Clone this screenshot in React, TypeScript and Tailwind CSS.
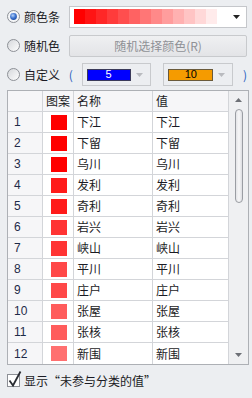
import React from "react";

const FONT = { fontFamily: '"Microsoft YaHei","Noto Sans CJK SC","Noto Sans",sans-serif' };

function Radio({ checked }: { checked?: boolean }) {
  return (
    <svg width="13" height="13" viewBox="0 0 13 13" className="shrink-0">
      <defs>
        <linearGradient id="rf" x1="0" y1="0" x2="1" y2="1">
          <stop offset="0" stopColor="#d4d6da" />
          <stop offset="1" stopColor="#ffffff" />
        </linearGradient>
        <radialGradient id="rd" cx="40%" cy="35%" r="70%">
          <stop offset="0" stopColor="#b9d3f7" />
          <stop offset="0.55" stopColor="#4077d2" />
          <stop offset="1" stopColor="#1d4aa0" />
        </radialGradient>
      </defs>
      <circle cx="6.5" cy="6.5" r="6" fill={checked ? "#f4f5f7" : "url(#rf)"} stroke="#8d9096" />
      {checked && <circle cx="6.5" cy="6.5" r="3.4" fill="url(#rd)" />}
    </svg>
  );
}

const barColors = Array.from({ length: 14 }, (_, i) => {
  const t = i / 13;
  const g = Math.round(255 * t);
  return `rgb(255,${g},${g})`;
});

const rows: [string, string][] = [
  ["下江", "#ff0000"],
  ["下留", "#ff0000"],
  ["乌川", "#ff0000"],
  ["发利", "#ff1b1b"],
  ["奇利", "#ff1b1b"],
  ["岩兴", "#ff3434"],
  ["峡山", "#ff3434"],
  ["平川", "#ff4848"],
  ["庄户", "#ff4848"],
  ["张屋", "#ff5c5c"],
  ["张核", "#ff5c5c"],
  ["新围", "#ff7070"],
];

function Arrow({ color }: { color: string }) {
  return (
    <svg width="7" height="4" viewBox="0 0 7 4">
      <polygon points="0,0 7,0 3.5,4" fill={color} />
    </svg>
  );
}

export default function App() {
  return (
    <div className="w-[252px] h-[398px] bg-[#eceef1] text-[12px] text-[#1b1b24] leading-none overflow-hidden" style={FONT}>
      <div className="pt-[2px] pl-[7px] pr-[5px]">
        <div className="h-[29px] flex items-center">
          <div className="w-[62px] flex items-center gap-[4px]">
            <Radio checked />
            <span>颜色条</span>
          </div>
          <div className="w-[178px] h-[22px] border border-[#c5c7cb] bg-white flex items-center pl-[4px] pr-[6px]">
            <div className="flex h-[15px] w-[154px]">
              {barColors.map((c, i) => (
                <div key={i} className="h-full flex-1" style={{ backgroundColor: c }} />
              ))}
            </div>
            <div className="flex-1 flex justify-end">
              <Arrow color="#222" />
            </div>
          </div>
        </div>
        <div className="h-[29px] flex items-center">
          <div className="w-[62px] flex items-center gap-[4px]">
            <Radio />
            <span>随机色</span>
          </div>
          <div className="w-[178px] h-[22px] border border-[#c8cacd] rounded-[2px] bg-gradient-to-b from-[#eff0f2] to-[#e3e4e7] flex items-center justify-center text-[#8f9196]">
            随机选择颜色(R)
          </div>
        </div>
        <div className="h-[29px] flex items-center">
          <div className="w-[62px] flex items-center gap-[4px]">
            <Radio />
            <span>自定义</span>
          </div>
          <span className="text-[#2a5fc0] w-[13px]">(</span>
          <div className="w-[70px] h-[23px] border border-[#c8cacd] bg-[#eceef1] flex items-center pl-[4px] pr-[7px]">
            <div className="w-[44px] h-[12px] bg-[#0000ff] border border-[#3a3a5a] text-white text-[11px] flex items-center justify-center" style={{ fontFamily: '"Liberation Sans",sans-serif' }}>5</div>
            <div className="flex-1 flex justify-end"><Arrow color="#b9bbbf" /></div>
          </div>
          <div className="w-[12px]" />
          <div className="w-[70px] h-[23px] border border-[#c8cacd] bg-[#eceef1] flex items-center pl-[4px] pr-[7px]">
            <div className="w-[45px] h-[12px] bg-[#f59b00] border border-[#6a5a3a] text-black text-[11px] flex items-center justify-center" style={{ fontFamily: '"Liberation Sans",sans-serif' }}>10</div>
            <div className="flex-1 flex justify-end"><Arrow color="#b9bbbf" /></div>
          </div>
          <span className="text-[#2a5fc0] ml-[10px]">)</span>
        </div>
      </div>

      <div className="ml-[7px] mt-[1px] w-[242px] border border-[#adb0b5] flex bg-white">
        <div className="w-[221px]">
          <div className="h-[21px] flex border-b border-[#d3d5d9] bg-[#f6f6f8]">
            <div className="w-[35px] border-r border-[#d3d5d9]" />
            <div className="w-[31px] border-r border-[#d3d5d9] flex items-center justify-center">图案</div>
            <div className="w-[79px] border-r border-[#d3d5d9] flex items-center pl-[3px]">名称</div>
            <div className="w-[76px] border-r border-[#d3d5d9] flex items-center pl-[3px]">值</div>
          </div>
          {rows.map(([name, color], i) => (
            <div key={i} className={`h-[21px] flex ${i < rows.length - 1 ? "border-b" : ""} border-[#d3d5d9]`}>
              <div className="w-[35px] border-r border-[#d3d5d9] bg-[#f6f6f8] flex items-center pl-[6px] text-[#1e2a48]" style={{ fontFamily: '"Liberation Sans",sans-serif', fontSize: 12 }}>{i + 1}</div>
              <div className="w-[31px] border-r border-[#d3d5d9] flex items-center pl-[8px]">
                <div className="w-[16px] h-[15px]" style={{ backgroundColor: color }} />
              </div>
              <div className="w-[79px] border-r border-[#d3d5d9] flex items-center pl-[3px]">{name}</div>
              <div className="w-[76px] border-r border-[#d3d5d9] flex items-center pl-[3px]">{name}</div>
            </div>
          ))}
        </div>
        <div className="w-[19px] bg-[#eff0f2] flex flex-col items-center">
          <div className="mt-[7px]"><svg width="7" height="4" viewBox="0 0 7 4"><polygon points="0,4 7,4 3.5,0" fill="#6d7076" /></svg></div>
          <div className="mt-[7px] w-[8px] h-[94px] rounded-[4px] border border-[#9a9da3] bg-gradient-to-r from-[#e3e4e7] via-[#f7f7f8] to-[#dcdde1]" />
          <div className="flex-1" />
          <div className="mb-[7px]"><Arrow color="#6d7076" /></div>
        </div>
      </div>

      <div className="ml-[7px] mt-[9px] flex items-center gap-[4px]">
        <div className="relative w-[13px] h-[13px] border border-[#8d9096] bg-white">
          <svg className="absolute left-[-1px] top-[-5px]" width="16" height="18" viewBox="0 0 16 18">
            <path d="M2.5 10.5 L6 15.5 L13.5 1.5" fill="none" stroke="#2a2d33" strokeWidth="1.8" strokeLinejoin="miter" />
          </svg>
        </div>
        <span>显示“未参与分类的值”</span>
      </div>
    </div>
  );
}
